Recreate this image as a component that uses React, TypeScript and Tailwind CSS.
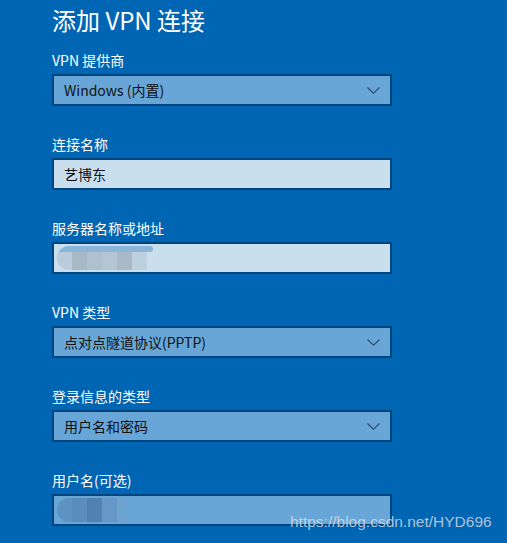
import { ReactNode } from "react";

const font = { fontFamily: '"Noto Sans CJK SC", "Noto Sans", sans-serif' };

function Chevron() {
  return (
    <svg width="13" height="7" viewBox="0 0 13 7" className="shrink-0">
      <path d="M0.5 0.5 L6.5 6.2 L12.5 0.5" fill="none" stroke="#2b4d70" strokeWidth="1.1" />
    </svg>
  );
}

function Field({ label, children }: { label: string; children: ReactNode }) {
  return (
    <div className="flex flex-col">
      <div className="h-5 leading-5 text-[14px] text-white">{label}</div>
      <div className="mt-1">{children}</div>
    </div>
  );
}

function Select({ value }: { value: string }) {
  return (
    <div className="w-[340px] h-8 border-2 border-[#00457d] bg-[#67a6d6] flex items-center justify-between pl-[10px] pr-[10px]">
      <span className="text-[14px] text-[#111]">{value}</span>
      <Chevron />
    </div>
  );
}

function TextBox({ value, children, light = true }: { value?: string; children?: ReactNode; light?: boolean }) {
  return (
    <div
      className={`relative w-[340px] h-8 border-2 border-[#00457d] flex items-center pl-[10px] ${
        light ? "bg-[#c9dfee]" : "bg-[#67a6d6]"
      }`}
    >
      {value && <span className="text-[14px] text-[#111]">{value}</span>}
      {children}
    </div>
  );
}

export default function App() {
  return (
    <div className="relative w-[507px] h-[543px] bg-[#0065b3] overflow-hidden" style={font}>
      <div className="pl-[52px] flex flex-col">
        <div className="h-10 leading-10 text-[24px] text-white">添加 VPN 连接</div>
        <div className="mt-[10px] flex flex-col gap-7">
          <Field label="VPN 提供商">
            <Select value="Windows (内置)" />
          </Field>
          <Field label="连接名称">
            <TextBox value="艺博东" />
          </Field>
          <Field label="服务器名称或地址">
            <TextBox>
              {/* mosaic blur over the address */}
              <div className="absolute left-[3px] top-[2px] w-[96px] h-6 rounded-l-full overflow-hidden flex flex-col">
                <div className="h-[6px] bg-[#8ab6d9] rounded-r-full" />
                <div className="flex-1 flex">
                  <div className="w-[15px] bg-[#b8ccdc]" />
                  <div className="w-[15px] bg-[#a8b9c6]" />
                  <div className="w-[15px] bg-[#b0c0cc]" />
                  <div className="w-[15px] bg-[#b5c6d2]" />
                  <div className="w-[15px] bg-[#aab9c5]" />
                  <div className="w-[15px] bg-[#bed1df]" />
                </div>
              </div>
            </TextBox>
          </Field>
          <Field label="VPN 类型">
            <Select value="点对点隧道协议(PPTP)" />
          </Field>
          <Field label="登录信息的类型">
            <Select value="用户名和密码" />
          </Field>
          <Field label="用户名(可选)">
            <TextBox light={false}>
              <div className="absolute left-[3px] top-[2px] w-[68px] h-6 rounded-l-full rounded-r-lg overflow-hidden flex">
                <div className="w-[15px] bg-[#5e92c2]" />
                <div className="w-[15px] bg-[#5a8dbd]" />
                <div className="w-[15px] bg-[#4f82b2]" />
                <div className="w-[15px] bg-[#6598c7]" />
                <div className="w-[8px] bg-[#6ea2cf]" />
              </div>
            </TextBox>
          </Field>
        </div>
      </div>
      <div
        className="absolute left-[290px] top-[512px] text-[15.5px] leading-5 text-[#d8dee6]/80"
        style={{ fontFamily: '"Liberation Sans", Arial, sans-serif' }}
      >
        https://blog.csdn.net/HYD696
      </div>
    </div>
  );
}
